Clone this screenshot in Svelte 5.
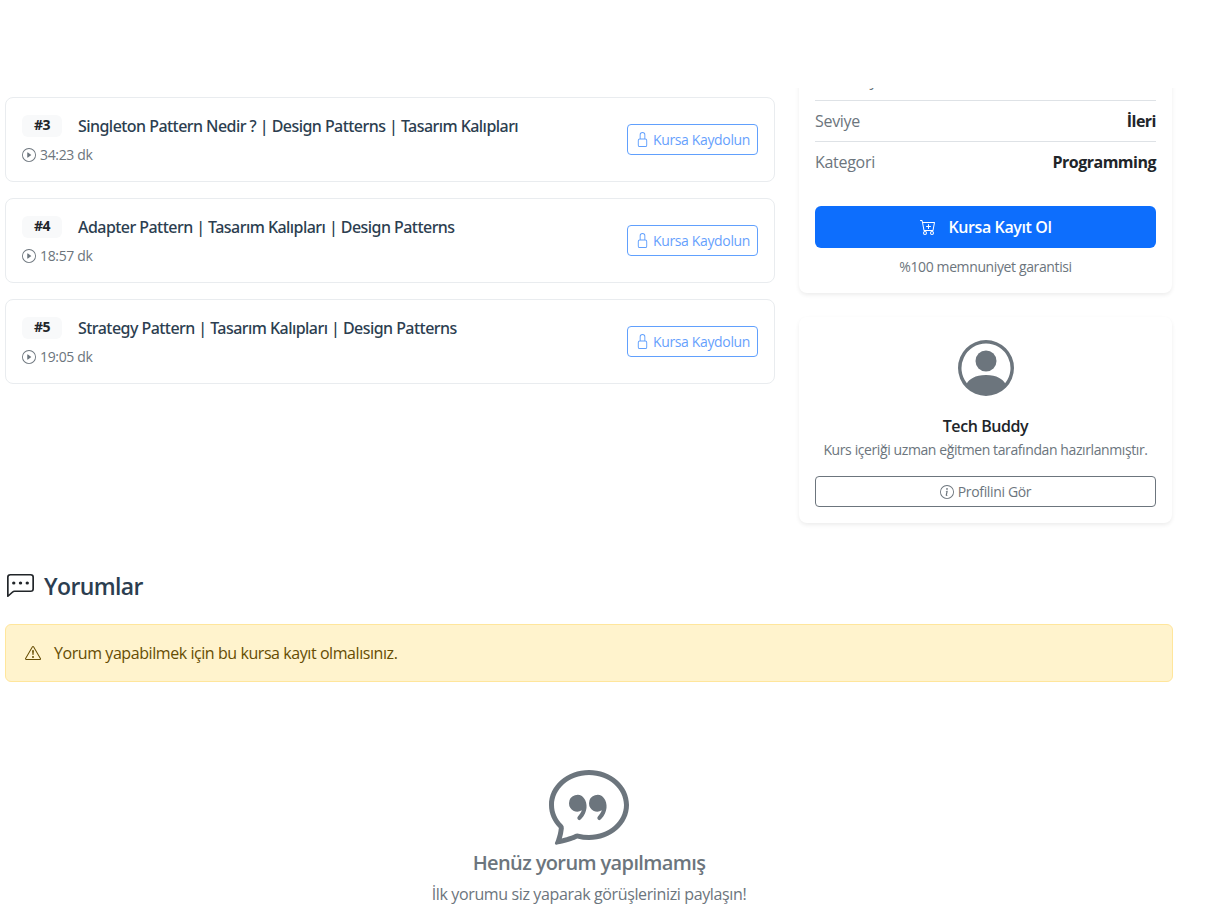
<script>
  const lessons = [
    { no: 3, title: 'Singleton Pattern Nedir ? | Design Patterns | Tasarım Kalıpları', time: '34:23 dk' },
    { no: 4, title: 'Adapter Pattern | Tasarım Kalıpları | Design Patterns', time: '18:57 dk' },
    { no: 5, title: 'Strategy Pattern | Tasarım Kalıpları | Design Patterns', time: '19:05 dk' }
  ];
  const info = [
    { label: 'Ders Sayısı', value: '5' },
    { label: 'Seviye', value: 'İleri' },
    { label: 'Kategori', value: 'Programming' }
  ];
</script>

<div class="page">
  <div class="navbar"></div>

  <div class="layout">
    <div class="lessons">
      {#each lessons as lesson}
        <div class="lesson">
          <div class="lesson-info">
            <div class="lesson-head">
              <span class="badge">#{lesson.no}</span>
              <span class="lesson-title">{lesson.title}</span>
            </div>
            <div class="lesson-time">
              <svg width="14" height="14" viewBox="0 0 16 16" fill="currentColor"><path d="M8 15A7 7 0 1 1 8 1a7 7 0 0 1 0 14m0 1A8 8 0 1 0 8 0a8 8 0 0 0 0 16"/><path d="M6.271 5.055a.5.5 0 0 1 .52.038l3.5 2.5a.5.5 0 0 1 0 .814l-3.5 2.5A.5.5 0 0 1 6 10.5v-5a.5.5 0 0 1 .271-.445"/></svg>
              {lesson.time}
            </div>
          </div>
          <button class="btn-lock" disabled>
            <svg width="15" height="15" viewBox="0 0 16 16" fill="currentColor"><path d="M8 1a2 2 0 0 1 2 2v4H6V3a2 2 0 0 1 2-2m3 6V3a3 3 0 0 0-6 0v4a2 2 0 0 0-2 2v5a2 2 0 0 0 2 2h6a2 2 0 0 0 2-2V9a2 2 0 0 0-2-2M5 8h6a1 1 0 0 1 1 1v5a1 1 0 0 1-1 1H5a1 1 0 0 1-1-1V9a1 1 0 0 1 1-1"/></svg>
            Kursa Kaydolun
          </button>
        </div>
      {/each}
    </div>

    <aside class="sidebar">
      <div class="card enroll">
        {#each info as row}
          <div class="info-row">
            <span class="info-label">{row.label}</span>
            <strong class="info-value">{row.value}</strong>
          </div>
        {/each}
        <button class="btn-enroll">
          <svg width="16" height="16" viewBox="0 0 16 16" fill="currentColor"><path d="M9 5.5a.5.5 0 0 0-1 0V7H6.5a.5.5 0 0 0 0 1H8v1.5a.5.5 0 0 0 1 0V8h1.5a.5.5 0 0 0 0-1H9z"/><path d="M.5 1a.5.5 0 0 0 0 1h1.11l.401 1.607 1.498 7.985A.5.5 0 0 0 4 12h1a2 2 0 1 0 0 4 2 2 0 0 0 0-4h7a2 2 0 1 0 0 4 2 2 0 0 0 0-4h1a.5.5 0 0 0 .491-.408l1.5-8A.5.5 0 0 0 14.5 3H2.89l-.405-1.621A.5.5 0 0 0 2 1zm3.915 10L3.102 4h10.796l-1.313 7zM6 14a1 1 0 1 1-2 0 1 1 0 0 1 2 0m7 0a1 1 0 1 1-2 0 1 1 0 0 1 2 0"/></svg>
          Kursa Kayıt Ol
        </button>
        <p class="guarantee">%100 memnuniyet garantisi</p>
      </div>

      <div class="card instructor">
        <svg class="avatar" width="56" height="56" viewBox="0 0 16 16" fill="currentColor"><path d="M11 6a3 3 0 1 1-6 0 3 3 0 0 1 6 0"/><path fill-rule="evenodd" d="M0 8a8 8 0 1 1 16 0A8 8 0 0 1 0 8m8-7a7 7 0 0 0-5.468 11.37C3.242 11.226 4.805 10 8 10s4.757 1.225 5.468 2.37A7 7 0 0 0 8 1"/></svg>
        <h6 class="instructor-name">Tech Buddy</h6>
        <p class="instructor-text">Kurs içeriği uzman eğitmen tarafından hazırlanmıştır.</p>
        <button class="btn-profile">
          <svg width="14" height="14" viewBox="0 0 16 16" fill="currentColor"><path d="M8 15A7 7 0 1 1 8 1a7 7 0 0 1 0 14m0 1A8 8 0 1 0 8 0a8 8 0 0 0 0 16"/><path d="m8.93 6.588-2.29.287-.082.38.45.083c.294.07.352.176.288.469l-.738 3.468c-.194.897.105 1.319.808 1.319.545 0 1.178-.252 1.465-.598l.088-.416c-.2.176-.492.246-.686.246-.275 0-.375-.193-.304-.533zM9 4.5a1 1 0 1 1-2 0 1 1 0 0 1 2 0"/></svg>
          Profilini Gör
        </button>
      </div>
    </aside>
  </div>

  <section class="comments">
    <h2 class="comments-title">
      <svg width="27" height="24" viewBox="0 0 16 16" preserveAspectRatio="none" fill="#212529"><path d="M14 1a1 1 0 0 1 1 1v8a1 1 0 0 1-1 1H4.414A2 2 0 0 0 3 11.586l-2 2V2a1 1 0 0 1 1-1zM2 0a2 2 0 0 0-2 2v12.793a.5.5 0 0 0 .854.353l2.853-2.853A1 1 0 0 1 4.414 12H14a2 2 0 0 0 2-2V2a2 2 0 0 0-2-2z"/><path d="M5 6a1 1 0 1 1-2 0 1 1 0 0 1 2 0m4 0a1 1 0 1 1-2 0 1 1 0 0 1 2 0m4 0a1 1 0 1 1-2 0 1 1 0 0 1 2 0"/></svg>
      Yorumlar
    </h2>

    <div class="alert">
      <svg width="16" height="16" viewBox="0 0 16 16" fill="currentColor"><path d="M7.938 2.016A.13.13 0 0 1 8.002 2a.13.13 0 0 1 .063.016.15.15 0 0 1 .054.057l6.857 11.667c.036.06.035.124.002.183a.2.2 0 0 1-.054.06.1.1 0 0 1-.066.017H1.146a.1.1 0 0 1-.066-.017.2.2 0 0 1-.054-.06.18.18 0 0 1 .002-.183L7.884 2.073a.15.15 0 0 1 .054-.057m1.044-.45a1.13 1.13 0 0 0-1.96 0L.165 13.233c-.457.778.091 1.767.98 1.767h13.713c.889 0 1.438-.99.98-1.767z"/><path d="M7.002 12a1 1 0 1 1 2 0 1 1 0 0 1-2 0M7.1 5.995a.905.905 0 1 1 1.8 0l-.35 3.507a.552.552 0 0 1-1.1 0z"/></svg>
      Yorum yapabilmek için bu kursa kayıt olmalısınız.
    </div>

    <div class="empty">
      <svg width="80" height="80" viewBox="0 0 16 16" fill="currentColor"><path d="M2.678 11.894a1 1 0 0 1 .287.801 11 11 0 0 1-.398 2c1.395-.323 2.247-.697 2.634-.893a1 1 0 0 1 .71-.074A8 8 0 0 0 8 14c3.996 0 7-2.807 7-6s-3.004-6-7-6-7 2.808-7 6c0 1.468.617 2.83 1.678 3.894m-.493 3.905a22 22 0 0 1-.713.129c-.2.032-.352-.176-.273-.362a10 10 0 0 0 .244-.637l.003-.01c.248-.72.45-1.548.524-2.319C.743 11.37 0 9.76 0 8c0-3.866 3.582-7 8-7s8 3.134 8 7-3.582 7-8 7a9 9 0 0 1-2.347-.306c-.52.263-1.639.742-3.468 1.105"/><path d="M7.066 6.76A1.665 1.665 0 0 0 4 7.668a1.667 1.667 0 0 0 2.561 1.406c-.131.389-.375.804-.777 1.22a.417.417 0 0 0 .6.58c1.486-1.54 1.293-3.214.682-4.112zm4 0A1.665 1.665 0 0 0 8 7.668a1.667 1.667 0 0 0 2.561 1.406c-.131.389-.375.804-.777 1.22a.417.417 0 0 0 .6.58c1.486-1.54 1.293-3.214.682-4.112z"/></svg>
      <h5 class="empty-title">Henüz yorum yapılmamış</h5>
      <p class="empty-text">İlk yorumu siz yaparak görüşlerinizi paylaşın!</p>
    </div>
  </section>
</div>

<style>
  :global(body) {
    margin: 0;
    background: #fff;
  }
  .page {
    position: relative;
    height: 904px;
    overflow: hidden;
    padding: 44px 48px 0 5px;
    box-sizing: border-box;
    font-family: "Open Sans", "Noto Sans", sans-serif;
    font-size: 16px;
    letter-spacing: -0.3px;
    color: #212529;
  }
  .navbar {
    position: absolute;
    top: 0;
    left: 0;
    right: 0;
    height: 88px;
    background: #fff;
    z-index: 5;
  }
  .layout {
    display: grid;
    grid-template-columns: 770px 373px;
    gap: 24px;
    align-items: start;
  }
  .lessons {
    padding-top: 53px;
    display: flex;
    flex-direction: column;
    gap: 16px;
  }
  .lesson {
    display: flex;
    align-items: center;
    justify-content: space-between;
    height: 85px;
    box-sizing: border-box;
    padding: 0 16px;
    border: 1px solid #e9ecef;
    border-radius: 8px;
  }
  .lesson-head {
    display: flex;
    align-items: center;
    gap: 16px;
    margin-bottom: 8px;
    line-height: 21px;
  }
  .badge {
    width: 40px;
    height: 22px;
    line-height: 20px;
    text-align: center;
    background: #f8f9fa;
    border-radius: 6px;
    font-size: 14px;
    font-weight: 700;
    letter-spacing: -0.6px;
    color: #212529;
  }
  .lesson-title {
    font-family: "Noto Sans", "Open Sans", sans-serif;
    font-weight: 500;
    letter-spacing: -0.55px;
    color: #2c3e50;
  }
  .lesson-time {
    display: flex;
    align-items: center;
    gap: 4px;
    font-size: 14px;
    letter-spacing: -0.35px;
    color: #6c757d;
  }
  .btn-lock {
    display: flex;
    align-items: center;
    justify-content: center;
    gap: 3px;
    width: 131px;
    height: 31px;
    padding: 0;
    font: inherit;
    font-size: 14px;
    letter-spacing: -0.35px;
    color: #0d6efd;
    background: transparent;
    border: 1px solid #0d6efd;
    border-radius: 4px;
    opacity: 0.65;
  }
  .sidebar {
    display: flex;
    flex-direction: column;
    gap: 24px;
  }
  .card {
    background: #fff;
    border-radius: 8px;
    box-shadow: 0 2px 4px rgba(0, 0, 0, 0.075);
  }
  .enroll {
    padding: 16px;
    height: 249px;
    box-sizing: border-box;
  }
  .info-row {
    display: flex;
    align-items: center;
    justify-content: space-between;
    height: 41px;
    box-sizing: border-box;
    border-bottom: 1px solid #dee2e6;
  }
  .info-row:nth-child(3) {
    border-bottom: 0;
    padding-bottom: 1px;
  }
  .info-label {
    color: #6c757d;
  }
  .info-value {
    font-weight: 700;
    letter-spacing: -0.5px;
  }
  .btn-enroll {
    display: flex;
    align-items: center;
    justify-content: center;
    gap: 13px;
    width: 100%;
    height: 42px;
    margin-top: 23px;
    padding: 0;
    font: inherit;
    font-weight: 600;
    letter-spacing: -0.4px;
    color: #fff;
    background: #0d6efd;
    border: 0;
    border-radius: 6px;
  }
  .guarantee {
    margin: 9px 0 0;
    text-align: center;
    font-size: 14px;
    line-height: 19px;
    letter-spacing: -0.38px;
    color: #6c757d;
  }
  .instructor {
    padding: 23px 16px 16px;
    height: 206px;
    box-sizing: border-box;
    display: flex;
    flex-direction: column;
    align-items: center;
  }
  .avatar {
    color: #6c757d;
    flex: none;
  }
  .instructor-name {
    margin: 19px 0 0;
    font-size: 16px;
    line-height: 22px;
    font-weight: 600;
    letter-spacing: -0.42px;
  }
  .instructor-text {
    margin: 3px 0 0;
    font-size: 14px;
    line-height: 20px;
    letter-spacing: -0.4px;
    color: #6c757d;
  }
  .btn-profile {
    display: flex;
    align-items: center;
    justify-content: center;
    gap: 4px;
    width: 100%;
    height: 31px;
    margin-top: 16px;
    padding: 0;
    font: inherit;
    font-size: 14px;
    letter-spacing: -0.35px;
    color: #6c757d;
    background: #fff;
    border: 1px solid #6c757d;
    border-radius: 4px;
  }
  .comments-title {
    display: flex;
    align-items: center;
    gap: 10px;
    margin: 45px 0 0 2px;
    height: 36px;
    font-size: 23px;
    font-weight: 600;
    letter-spacing: -0.62px;
    color: #2c3e50;
  }
  .alert {
    display: flex;
    align-items: center;
    gap: 13px;
    height: 58px;
    box-sizing: border-box;
    margin-top: 20px;
    padding: 0 19px;
    letter-spacing: -0.43px;
    color: #664d03;
    background: #fff3cd;
    border: 1px solid #ffe69c;
    border-radius: 6px;
  }
  .empty {
    display: flex;
    flex-direction: column;
    align-items: center;
    padding-top: 83px;
    color: #6c757d;
  }
  .empty-title {
    margin: 5px 0 0;
    font-size: 20px;
    line-height: 26px;
    font-weight: 600;
    letter-spacing: -0.62px;
  }
  .empty-text {
    margin: 6px 0 0;
    line-height: 24px;
    letter-spacing: -0.37px;
  }
</style>
